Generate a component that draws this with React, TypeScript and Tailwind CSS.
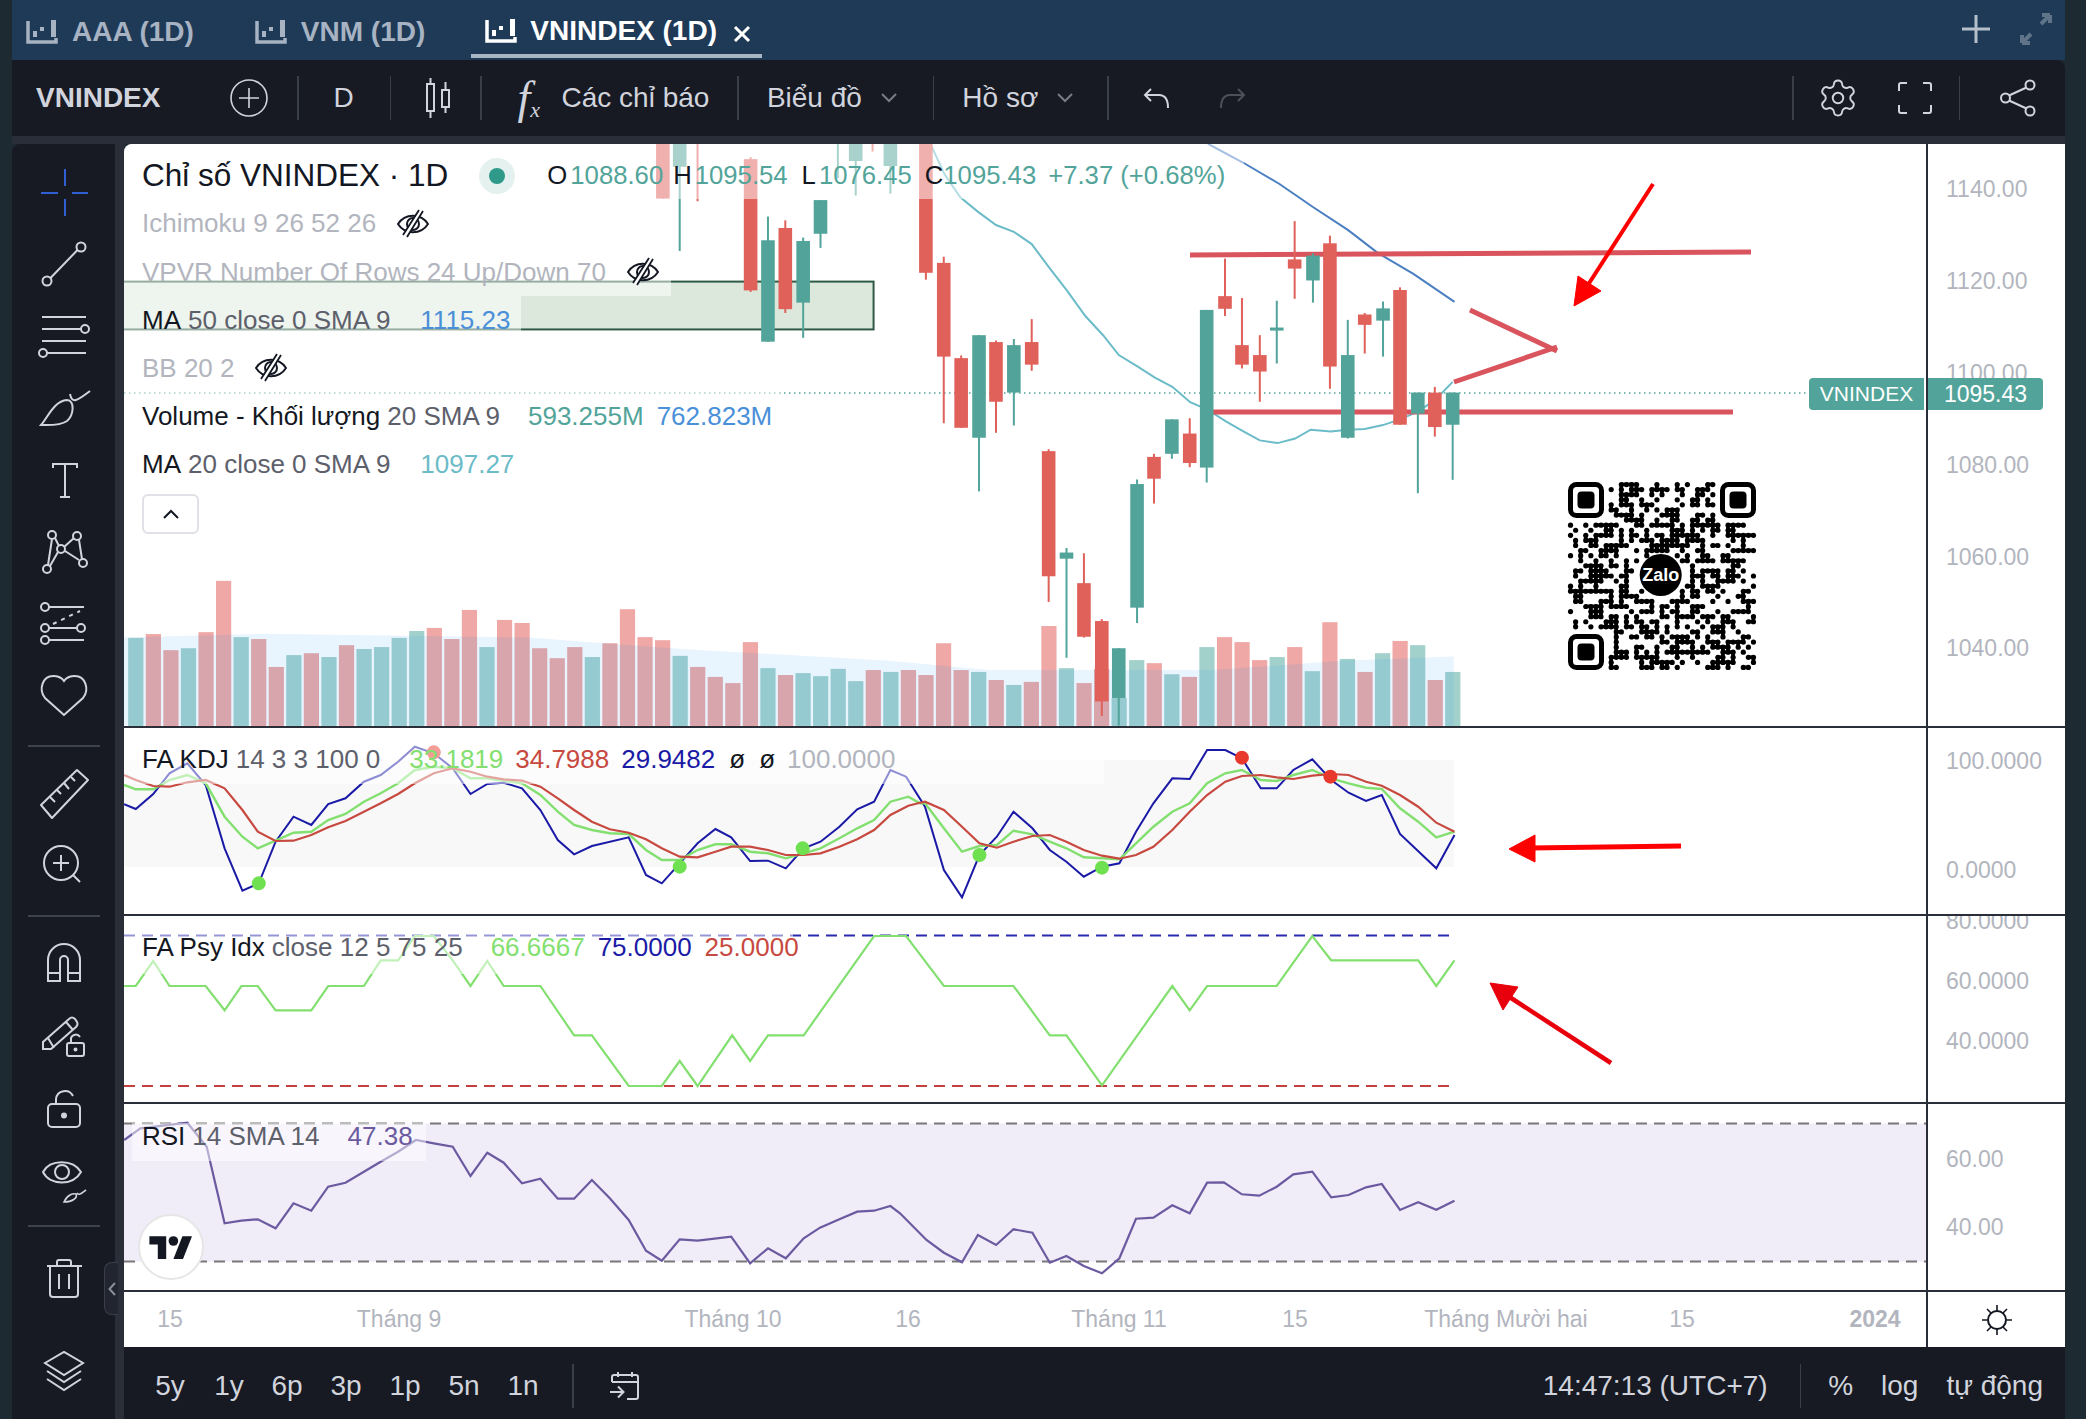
import { ReactNode } from "react";
import { Settings } from "lucide-react";

// page coordinates of the samples read off the chart
const x5 = (z: number) => 120 + z / 1.96;
const x6 = (z: number) => 900 + z / 2.24;
const x9 = (z: number) => 900 + z / 1.322;
const y5 = (z: number) => 140 + z / 2.613;
const y8 = (z: number) => 720 + z / 3;
const y10 = (z: number) => 1100 + z / 3;

const RED = "#e0605a";
const GREEN = "#52a49a";

type Candle = [number, number, number, number, number, "r" | "g"];

const candlesLeft: Candle[] = [
  [1064, 0, 0, 153, 153, "r"],
  [1097, 0, 0, 70, 290, "g"],
  [1132, 0, 0, 10, 160, "r"],
  [1236, 45, 50, 393, 397, "r"],
  [1270, 200, 262, 527, 527, "g"],
  [1304, 210, 230, 442, 452, "r"],
  [1339, 255, 264, 425, 517, "g"],
  [1373, 157, 157, 245, 282, "g"],
  [1407, 0, 0, 10, 100, "g"],
  [1442, 0, 0, 55, 145, "g"],
  [1475, 0, 0, 10, 30, "r"],
  [1510, 0, 0, 68, 140, "g"],
];

const candlesRight: Candle[] = [
  [58, 0, 0, 347, 365, "r"],
  [98, 305, 321, 566, 740, "r"],
  [137, 563, 570, 752, 752, "r"],
  [177, 510, 510, 778, 918, "g"],
  [215, 524, 528, 684, 765, "r"],
  [255, 520, 536, 660, 746, "g"],
  [295, 468, 528, 587, 603, "r"],
  [333, 808, 813, 1140, 1207, "r"],
  [373, 1066, 1078, 1094, 1353, "g"],
  [412, 1080, 1158, 1298, 1300, "r"],
  [452, 1252, 1257, 1467, 1505, "r"],
  [490, 1328, 1328, 1458, 1530, "g"],
  [531, 887, 899, 1222, 1262, "g"],
  [569, 820, 828, 885, 950, "r"],
  [609, 730, 730, 820, 833, "g"],
  [649, 727, 767, 844, 855, "r"],
  [687, 444, 444, 856, 895, "g"],
  [728, 310, 408, 441, 460, "r"],
  [766, 413, 536, 587, 597, "r"],
  [806, 510, 562, 605, 684, "r"],
  [844, 420, 490, 498, 584, "g"],
  [884, 212, 312, 336, 415, "r"],
  [925, 296, 302, 367, 425, "g"],
  [963, 250, 270, 592, 650, "r"],
  [1003, 470, 562, 778, 780, "g"],
  [1041, 452, 456, 483, 558, "r"],
  [1082, 422, 440, 472, 566, "g"],
  [1120, 385, 392, 744, 744, "r"],
  [1160, 660, 660, 715, 923, "g"],
  [1198, 645, 660, 750, 775, "r"],
  [1238, 660, 660, 744, 888, "g"],
];

const candles: Candle[] = [
  ...candlesLeft.map((c) => [x5(c[0]), y5(c[1]), y5(c[2]), y5(c[3]), y5(c[4]), c[5]] as Candle),
  ...candlesRight.map((c) => [x6(c[0]), y5(c[1]), y5(c[2]), y5(c[3]), y5(c[4]), c[5]] as Candle),
];

// volume bar tops, left to right
const volume: [number, "r" | "g"][] = [
  [1301, "g"], [1291, "r"], [1333, "r"], [1328, "g"], [1286, "r"], [1152, "r"], [1299, "g"], [1304, "r"],
  [1377, "r"], [1346, "g"], [1341, "r"], [1351, "g"], [1320, "r"], [1330, "g"], [1325, "g"], [1301, "g"],
  [1283, "g"], [1275, "r"], [1304, "r"], [1228, "r"], [1325, "g"], [1254, "r"], [1262, "r"], [1328, "r"],
  [1354, "r"], [1325, "r"], [1351, "g"], [1315, "r"], [1226, "r"], [1299, "r"], [1307, "r"], [1348, "g"],
  [1377, "r"], [1403, "r"], [1419, "r"], [1312, "r"], [1380, "g"], [1398, "r"], [1393, "g"], [1401, "g"],
  [1382, "g"], [1414, "g"], [1385, "r"], [1390, "g"], [1385, "r"], [1398, "r"], [1315, "r"], [1385, "r"],
  [1390, "g"], [1411, "r"], [1424, "g"], [1416, "r"], [1270, "r"], [1380, "g"], [1419, "r"], [1382, "r"],
  [1458, "g"], [1359, "g"], [1367, "r"], [1396, "g"], [1403, "r"], [1325, "g"], [1299, "r"], [1312, "r"],
  [1359, "r"], [1351, "g"], [1325, "r"], [1388, "g"], [1260, "r"], [1356, "g"], [1390, "r"], [1341, "g"],
  [1309, "r"], [1320, "g"], [1411, "r"], [1390, "g"],
];

const plot = (pts: number[][], fx: (z: number) => number, fy: (z: number) => number) =>
  pts.map(([x, y]) => `${fx(x).toFixed(1)},${fy(y).toFixed(1)}`).join(" ");

// left half sampled at one scale, right half at another
const plotTwo = (left: number[][], right: number[][], fy: (z: number) => number) => {
  const start = x9(right[0][0]);
  const l = left.filter(([x]) => x5(x) < start);
  return plot(l, x5, fy) + " " + plot(right, x9, fy);
};

const ma20 = plot(
  [[68, 10], [100, 90], [135, 150], [175, 188], [215, 222], [255, 240], [295, 272], [335, 335], [375, 395], [415, 460], [455, 510], [490, 562], [530, 590], [570, 620], [610, 645], [650, 685], [690, 705], [730, 735], [770, 762], [806, 785], [846, 792], [885, 780], [920, 757], [965, 762], [1003, 757], [1041, 755], [1082, 745], [1120, 730], [1160, 710], [1198, 680], [1238, 632]],
  x6,
  y5
);
const ma50 = plot(
  [[690, 10], [770, 60], [850, 115], [925, 175], [1003, 235], [1070, 295], [1150, 350], [1242, 423]],
  x6,
  y5
);
const volumeArea =
  plot([[8, 1300], [280, 1290], [800, 1300], [1100, 1330], [1500, 1360]], x5, y5) +
  " " +
  plot([[200, 1385], [400, 1385], [700, 1385], [1000, 1360], [1240, 1350], [1240, 1530]], x6, y5) +
  ` ${x5(8)},${y5(1530)}`;

const kdjBlue = plotTwo(
  [[8, 253], [31, 267], [65, 222], [97, 160], [132, 130], [168, 195], [205, 385], [240, 512], [272, 490], [305, 365], [340, 290], [375, 315], [408, 252], [442, 235], [478, 185], [511, 165], [545, 125], [578, 80], [615, 100], [652, 145], [687, 222], [720, 192], [752, 188], [788, 205], [824, 270], [858, 360], [890, 403], [925, 378], [997, 352], [1031, 465], [1062, 490], [1097, 430], [1132, 370], [1167, 327], [1198, 352], [1235, 423], [1270, 422], [1305, 445], [1340, 385], [1373, 365], [1410, 320], [1445, 268], [1478, 245], [1510, 150]],
  [[8, 170], [33, 260], [58, 450], [82, 532], [105, 405], [128, 350], [150, 275], [175, 325], [198, 390], [220, 425], [243, 470], [267, 440], [290, 430], [312, 335], [335, 250], [360, 175], [383, 177], [406, 90], [430, 90], [452, 115], [477, 205], [498, 205], [520, 150], [545, 118], [570, 180], [593, 218], [616, 243], [637, 225], [661, 342], [709, 445], [733, 345]],
  y8
);
const kdjGreen = plotTwo(
  [[8, 195], [31, 208], [65, 208], [97, 180], [132, 165], [168, 190], [205, 290], [240, 350], [270, 385], [305, 362], [340, 338], [375, 335], [408, 300], [442, 282], [478, 245], [511, 220], [545, 190], [578, 150], [615, 140], [652, 145], [687, 175], [720, 175], [752, 182], [788, 190], [824, 225], [858, 275], [890, 315], [925, 330], [960, 340], [997, 342], [1031, 390], [1062, 420], [1097, 420], [1132, 390], [1167, 373], [1198, 373], [1235, 395], [1270, 400], [1305, 415], [1340, 400], [1373, 385], [1410, 355], [1445, 325], [1478, 300], [1510, 245], [1545, 230], [1568, 250]],
  [[33, 250], [58, 325], [82, 395], [105, 378], [128, 375], [150, 332], [175, 343], [198, 365], [220, 385], [243, 412], [267, 415], [290, 418], [312, 370], [335, 320], [360, 275], [383, 250], [406, 190], [430, 160], [452, 150], [477, 180], [498, 183], [520, 165], [545, 150], [570, 175], [593, 190], [616, 203], [637, 207], [661, 265], [685, 305], [709, 352], [733, 335]],
  y8
);
const kdjRed = plotTwo(
  [[8, 165], [31, 180], [65, 198], [97, 200], [132, 187], [168, 180], [205, 205], [240, 270], [270, 335], [305, 363], [340, 362], [375, 345], [408, 322], [442, 303], [478, 275], [511, 250], [545, 222], [578, 190], [615, 160], [652, 145], [687, 155], [720, 170], [752, 178], [788, 182], [824, 200], [858, 235], [890, 270], [925, 305], [960, 328], [997, 338], [1031, 358], [1062, 385], [1097, 410], [1132, 412], [1167, 395], [1198, 380], [1235, 380], [1270, 390], [1305, 405], [1340, 405], [1373, 400], [1410, 380], [1445, 358], [1478, 330], [1510, 285], [1545, 257], [1568, 248]],
  [[33, 245], [58, 270], [82, 320], [105, 370], [128, 383], [150, 365], [175, 348], [198, 345], [220, 365], [243, 390], [267, 407], [290, 416], [312, 405], [335, 380], [360, 330], [383, 275], [406, 225], [430, 185], [452, 168], [477, 165], [498, 172], [520, 177], [545, 167], [570, 162], [593, 165], [616, 185], [637, 197], [661, 225], [685, 260], [709, 308], [733, 335]],
  y8
);
const psyLine = plotTwo(
  [[8, 795], [31, 795], [65, 720], [97, 795], [168, 795], [205, 868], [238, 795], [270, 795], [305, 868], [375, 868], [408, 795], [478, 795], [511, 718], [545, 718], [578, 645], [615, 645], [652, 718], [687, 795], [720, 720], [752, 795], [824, 795], [890, 943], [925, 943], [997, 1095], [1062, 1095], [1097, 1020], [1132, 1095], [1200, 943], [1235, 1020], [1270, 943], [1340, 943], [1478, 645], [1540, 645]],
  [[8, 645], [58, 795], [150, 795], [198, 943], [220, 943], [267, 1093], [360, 795], [383, 868], [406, 795], [498, 795], [545, 645], [570, 718], [685, 718], [709, 795], [733, 718]],
  y8
);
const rsiLine = plotTwo(
  [[8, 120], [40, 85], [132, 68], [170, 140], [205, 370], [238, 362], [270, 358], [305, 385], [340, 310], [375, 332], [408, 260], [442, 248], [478, 215], [511, 185], [545, 155], [580, 120], [615, 130], [652, 140], [687, 228], [720, 158], [752, 188], [788, 250], [824, 236], [858, 296], [890, 296], [925, 240], [960, 295], [997, 360], [1031, 452], [1062, 482], [1097, 418], [1132, 422], [1198, 410], [1235, 490], [1270, 445], [1305, 475], [1340, 415], [1372, 383], [1410, 358], [1445, 335], [1478, 332], [1510, 318]],
  [[0, 340], [35, 420], [58, 458], [82, 487], [103, 405], [127, 435], [150, 388], [175, 398], [198, 488], [220, 468], [243, 498], [267, 520], [290, 475], [312, 356], [335, 353], [360, 316], [383, 340], [406, 248], [428, 247], [452, 283], [475, 287], [498, 260], [520, 223], [545, 215], [570, 292], [593, 285], [616, 262], [637, 252], [661, 330], [685, 307], [709, 329], [733, 302]],
  y10
);

// QR code body: a seeded dot pattern on a 37 module grid
const QR_N = 37;
const qrCells = (() => {
  let seed = 7731;
  const cells: boolean[][] = [];
  for (let r = 0; r < QR_N; r++) {
    const row: boolean[] = [];
    for (let c = 0; c < QR_N; c++) {
      seed = (seed * 1103515245 + 12345) & 0x7fffffff;
      const inFinder = (r < 8 && c < 8) || (r < 8 && c > 28) || (r > 28 && c < 8);
      const dr = r - 18;
      const dc = c - 18;
      const inLogo = dr * dr + dc * dc < 22;
      row.push(!inFinder && !inLogo && (seed >> 16) % 100 < 50);
    }
    cells.push(row);
  }
  return cells;
})();

function QrCode() {
  const p = 188 / QR_N;
  const finder = (x: number, y: number) => (
    <g key={`${x}-${y}`}>
      <rect x={x + 2.5} y={y + 2.5} width={31} height={31} rx={6} fill="none" stroke="#000" strokeWidth={5} />
      <rect x={x + 9.5} y={y + 9.5} width={17} height={17} rx={4} fill="#000" />
    </g>
  );
  return (
    <g transform="translate(1568 482)">
      {qrCells.map((row, r) =>
        row.map((on, c) =>
          on ? (
            <g key={`${r}-${c}`}>
              <circle cx={c * p + p / 2} cy={r * p + p / 2} r={2.6} fill="#000" />
              {row[c + 1] && <rect x={c * p + p / 2} y={r * p + 0.6} width={p} height={p - 1.4} fill="#000" />}
              {qrCells[r + 1]?.[c] && <rect x={c * p + 0.6} y={r * p + p / 2} width={p - 1.4} height={p} fill="#000" />}
            </g>
          ) : null
        )
      )}
      {finder(0, 0)}
      {finder(152, 0)}
      {finder(0, 152)}
      <circle cx={92.7} cy={93} r={21} fill="#000" />
      <text x={92.7} y={99} textAnchor="middle" fill="#fff" fontSize={18} fontWeight={700} fontFamily="Liberation Sans, sans-serif">
        Zalo
      </text>
    </g>
  );
}

function MainChart() {
  return (
    <svg className="block w-[1802px] h-[582px]" viewBox="124 144 1802 582">
      <rect x={120} y={y5(370)} width={x5(1477) - 120} height={y5(495) - y5(370)} fill="#dce8dc" stroke="#2d5a44" strokeWidth={2} />
      {volume.map(([top, c], i) => (
        <rect
          key={i}
          x={135.8 + i * 17.56 - 7.6}
          y={y5(top)}
          width={15.2}
          height={726 - y5(top)}
          fill={c === "r" ? "#e0524c" : "#45a39a"}
          opacity={0.5}
        />
      ))}
      <polygon points={volumeArea} fill="#2196f3" opacity={0.1} />
      <line x1={124} y1={393} x2={1812} y2={393} stroke={GREEN} strokeWidth={1.5} strokeDasharray="1.5 3.5" />
      <polyline points={ma20} fill="none" stroke="#6bbcc8" strokeWidth={2} />
      <polyline points={ma50} fill="none" stroke="#4a7fc1" strokeWidth={2} />
      <g stroke="#d9545c" fill="none" strokeWidth={5}>
        <line x1={1190} y1={255} x2={1751} y2={252} />
        <line x1={1212} y1={412} x2={1733} y2={412} />
        <line x1={1470} y1={310} x2={1557} y2={351} />
        <line x1={1454} y1={382} x2={1557} y2={347} />
      </g>
      {candles.map(([x, wt, bt, bb, wb, c], i) => (
        <g key={i} fill={c === "r" ? RED : GREEN}>
          <rect x={x - 1} y={wt} width={2} height={wb - wt} />
          <rect x={x - 6.8} y={bt} width={13.6} height={bb - bt} />
        </g>
      ))}
      <QrCode />
      <g fill="#f00" stroke="#f00">
        <line x1={1653} y1={184} x2={1586} y2={288} strokeWidth={4} />
        <polygon points="1574,306 1578,276 1601,291" />
      </g>
    </svg>
  );
}

function KdjChart() {
  const dots: [number, number, string][] = [
    [x5(272), y8(490), "#6fe04f"],
    [x5(1097), y8(440), "#6fe04f"],
    [x5(1338), y8(385), "#6fe04f"],
    [x9(105), y8(405), "#6fe04f"],
    [x9(267), y8(443), "#6fe04f"],
    [x5(615), y8(97), "#e8392c"],
    [x9(452), y8(113), "#e8392c"],
    [x9(569), y8(170), "#e8392c"],
  ];
  return (
    <svg className="block w-[1802px] h-[186px]" viewBox="124 728 1802 186">
      <rect x={124} y={760} width={1330} height={107} fill="#f8f8f9" />
      <polyline points={kdjBlue} fill="none" stroke="#1a1aa6" strokeWidth={2} />
      <polyline points={kdjGreen} fill="none" stroke="#83e070" strokeWidth={2.4} />
      <polyline points={kdjRed} fill="none" stroke="#c7493f" strokeWidth={2.2} />
      {dots.map(([x, y, c], i) => (
        <circle key={i} cx={x} cy={y} r={7} fill={c} />
      ))}
      <g fill="#f00" stroke="#f00">
        <line x1={1681} y1={846} x2={1530} y2={848} strokeWidth={5} />
        <polygon points="1509,849 1535,835 1535,862" />
      </g>
    </svg>
  );
}

function PsyChart() {
  return (
    <svg className="block w-[1802px] h-[186px]" viewBox="124 915 1802 186">
      <line x1={124} y1={934.5} x2={1454} y2={934.5} stroke="#2a2ab0" strokeWidth={2} strokeDasharray="11 7" />
      <line x1={124} y1={1085} x2={1454} y2={1085} stroke="#c2403f" strokeWidth={2} strokeDasharray="11 7" />
      <polyline points={psyLine} fill="none" stroke="#83e070" strokeWidth={2.2} />
      <g fill="#e8000d" stroke="#e8000d">
        <line x1={1611} y1={1062} x2={1508} y2={995} strokeWidth={4.5} />
        <polygon points="1490,982 1518,986 1503,1009" />
      </g>
    </svg>
  );
}

function RsiChart() {
  return (
    <svg className="block w-[1802px] h-[186px]" viewBox="124 1104 1802 186">
      <rect x={124} y={1123.5} width={1802} height={138} fill="#f0ecf8" />
      <line x1={124} y1={1123.5} x2={1926} y2={1123.5} stroke="#787878" strokeWidth={2} strokeDasharray="11 7" />
      <line x1={124} y1={1261.5} x2={1926} y2={1261.5} stroke="#787878" strokeWidth={2} strokeDasharray="11 7" />
      <polyline points={rsiLine} fill="none" stroke="#6b5aa0" strokeWidth={2.2} />
    </svg>
  );
}

function EyeOff() {
  return (
    <svg width="32" height="28" viewBox="0 0 32 28" className="overflow-visible">
      <path d="M1 14 C8 3 24 3 31 14 C24 25 8 25 1 14Z" fill="none" stroke="#131722" strokeWidth="2" />
      <circle cx="16" cy="14" r="6" fill="none" stroke="#131722" strokeWidth="2" />
      <path d="M25 0 L8 26" stroke="#fff" strokeWidth="4" />
      <path d="M26 1 L10 27 M22 0 L6 25" stroke="#131722" strokeWidth="1.8" />
    </svg>
  );
}

function TabIcon({ color }: { color: string }) {
  return (
    <svg width="32" height="24" viewBox="0 0 32 24" fill={color}>
      <path d="M2 1 V22 H30 V18" fill="none" stroke={color} strokeWidth="3.5" />
      <rect x="7" y="11" width="4" height="6" />
      <rect x="14" y="7" width="4" height="4" />
      <rect x="25" y="0" width="5" height="17" />
    </svg>
  );
}

function Sep() {
  return <div className="w-[1.5px] h-[44px] bg-[#3a3e49] shrink-0" />;
}

function Chevron({ className }: { className: string }) {
  return (
    <svg width="16" height="10" viewBox="0 0 16 10" className={className}>
      <path d="M1 1 L8 8 L15 1" fill="none" stroke="#787b86" strokeWidth="2" />
    </svg>
  );
}

function Tool({ className, children }: { className: string; children: ReactNode }) {
  return (
    <svg viewBox="0 0 48 48" className={`w-12 h-12 shrink-0 overflow-visible fill-none stroke-[#d1d4dc] stroke-2 ${className}`}>
      {children}
    </svg>
  );
}

function ToolSep({ className }: { className: string }) {
  return <div className={`w-[72px] h-[2px] bg-[#3e424d] shrink-0 ${className}`} />;
}

function LeftToolbar() {
  return (
    <div className="relative w-[103px] shrink-0 bg-[#171a23] rounded-tl-lg flex flex-col items-center pt-[25px]">
      <Tool className="">
        <path d="M25 0 V17 M25 30 V47 M1 24 H18 M32 24 H48" stroke="#2f5fd0" />
      </Tool>
      <Tool className="mt-[23px]">
        <circle cx="41" cy="7" r="4.5" />
        <circle cx="7" cy="41" r="4.5" />
        <path d="M37.5 10 L10.5 38" />
      </Tool>
      <Tool className="mt-[23px]">
        <path d="M2 6 H46 M2 18 H41 M2 30 H46 M7 42 H46" />
        <circle cx="45" cy="18" r="4" />
        <circle cx="3" cy="42" r="4" />
      </Tool>
      <Tool className="mt-[28px]">
        <path d="M1 38 C8 30 14 14 27 13 C35 13 34 28 27 34 C20 39 8 38 1 38Z" />
        <path d="M30 7 C32 17 37 14 50 4" />
      </Tool>
      <Tool className="mt-[20px]">
        <path d="M13 13 V9 H37 V13 M25 9 V42 M20 42 H30" />
      </Tool>
      <Tool className="mt-[22px]">
        <path d="M12 14 L8 40 M15 13 L19 21 M34 13 L24 22 M39 15 L42 34 M25 26 L39 35 M18 27 L10 41" />
        <circle cx="12" cy="10" r="4" />
        <circle cx="37" cy="11" r="4" />
        <circle cx="21" cy="24" r="4" />
        <circle cx="43" cy="38" r="4" />
        <circle cx="7" cy="44" r="4" />
      </Tool>
      <Tool className="mt-[27px]">
        <path d="M9 7 H44 M9 28 H37 M9 40 H44" />
        <circle cx="5" cy="7" r="4" />
        <circle cx="5" cy="28" r="4" />
        <circle cx="41" cy="28" r="4" />
        <circle cx="5" cy="40" r="4" />
        <path d="M13 24 L40 11" strokeDasharray="4 5" />
      </Tool>
      <Tool className="mt-[23px]">
        <path d="M24 44 L5 27 C-2 18 3 5 13 5 C18 5 22 7 24 10 C26 7 30 5 35 5 C45 5 50 18 43 27 Z" />
      </Tool>
      <ToolSep className="mt-[26px]" />
      <Tool className="mt-[23px]">
        <path d="M1 35 L12 48 L48 10 L37 0 Z" strokeLinejoin="round" />
        <path d="M10 27 L15 32 M17 20 L21 24 M24 13 L29 19 M31 7 L35 11" />
      </Tool>
      <Tool className="mt-[23px]">
        <circle cx="21" cy="22" r="17" />
        <path d="M21 14 V30 M13 22 H29 M33 34 L40 41" />
      </Tool>
      <ToolSep className="mt-[26px]" />
      <Tool className="mt-[22px]">
        <path d="M8 42 V21 A16 16 0 0 1 40 21 V42 H28 V21 A4 4 0 0 0 20 21 V42 Z M8 34 H20 M28 34 H40" />
      </Tool>
      <Tool className="mt-[24px]">
        <path d="M3 38 L3 31 L29 8 C31 6 33 6 35 8 L37 11 C38 13 38 14 36 16 L11 38 Z M8 27 L14 37 M26 11 L33 19" />
        <rect x="27" y="32" width="17" height="13" rx="2" />
        <path d="M31 32 V27 A5 5 0 0 1 40 26" />
        <circle cx="35.5" cy="38.5" r="1" />
      </Tool>
      <Tool className="mt-[27px]">
        <rect x="8" y="18" width="32" height="23" rx="4" />
        <path d="M16 18 V13 A9 9 0 0 1 33 10" />
        <circle cx="24" cy="29.5" r="2" fill="#d1d4dc" />
      </Tool>
      <Tool className="mt-[22px]">
        <path d="M3 16 C10 3 33 3 41 16 C33 30 10 30 3 16Z" />
        <circle cx="22" cy="16" r="7" />
        <path d="M24 46 C27 39 33 37 36 38 C38 42 32 46 24 46Z M37 37 C39 40 42 37 46 34" strokeWidth="1.6" />
      </Tool>
      <ToolSep className="mt-[21px]" />
      <Tool className="mt-[29px]">
        <path d="M7 10 H42 M17 10 V6 C17 5 18 4 19 4 H29 C30 4 31 5 31 6 V10 M10 10 V38 C10 40 11 41 13 41 H35 C37 41 38 40 38 38 V10 M19 18 V33 M29 18 V33" />
      </Tool>
      <Tool className="mt-[46px]">
        <path d="M5 13 L24 2 L43 13 L24 25 Z M7 21 L24 32 L41 21 M7 29 L24 40 L41 29" />
      </Tool>
      <div className="absolute left-[92px] top-[1118px] w-[14px] h-[53px] rounded-l-lg border border-r-0 border-[#3a3e49] bg-[#22252f] flex items-center justify-center">
        <svg width="8" height="14" viewBox="0 0 8 14">
          <path d="M7 1 L1.5 7 L7 13" fill="none" stroke="#8a8e99" strokeWidth="2" />
        </svg>
      </div>
    </div>
  );
}

function LegendRow({ className, children }: { className: string; children: ReactNode }) {
  return <div className={`flex items-center whitespace-nowrap bg-white/50 pl-[18px] ${className}`}>{children}</div>;
}

function MainLegend() {
  return (
    <div className="absolute left-0 top-0 flex flex-col text-[26px] text-[#5d606b]">
      <LegendRow className="h-[55px] w-[1120px] pt-[8px] text-[25.7px]">
        <span className="text-[31.5px] text-[#131722]">Chỉ số VNINDEX · 1D</span>
        <div className="ml-[31px] w-9 h-9 rounded-full bg-[#e5f1ef] flex items-center justify-center">
          <div className="w-4 h-4 rounded-full bg-[#2f9a8a]" />
        </div>
        <span className="ml-[32px] text-[#131722]">O</span>
        <span className="ml-[3px] text-[#52a49a]">1088.60</span>
        <span className="ml-[10px] text-[#131722]">H</span>
        <span className="ml-[3px] text-[#52a49a]">1095.54</span>
        <span className="ml-[14px] text-[#131722]">L</span>
        <span className="ml-[3px] text-[#52a49a]">1076.45</span>
        <span className="ml-[13px] text-[#131722]">C</span>
        <span className="text-[#52a49a]">1095.43</span>
        <span className="ml-[12px] text-[#52a49a]">+7.37 (+0.68%)</span>
      </LegendRow>
      <LegendRow className="h-[49px] w-fit pr-2 text-[#b2b5be]">
        <span>Ichimoku 9 26 52 26</span>
        <span className="ml-[21px] flex">
          <EyeOff />
        </span>
      </LegendRow>
      <LegendRow className="h-[48px] w-[547px] text-[#b2b5be]">
        <span>VPVR Number Of Rows 24 Up/Down 70</span>
        <span className="ml-[21px] flex">
          <EyeOff />
        </span>
      </LegendRow>
      <LegendRow className="h-[48px] w-[397px]">
        <span className="text-[#131722]">MA</span>
        <span className="ml-[7px]">50 close 0 SMA 9</span>
        <span className="ml-[30px] text-[#4a90d9]">1115.23</span>
      </LegendRow>
      <LegendRow className="h-[48px] w-fit pr-2 text-[#b2b5be]">
        <span>BB 20 2</span>
        <span className="ml-[20px] flex">
          <EyeOff />
        </span>
      </LegendRow>
      <LegendRow className="h-[48px] w-fit pr-2">
        <span className="text-[#131722]">Volume - Khối lượng</span>
        <span className="ml-[7px]">20 SMA 9</span>
        <span className="ml-[28px] text-[#52a49a]">593.255M</span>
        <span className="ml-[13px] text-[#4a90d9]">762.823M</span>
      </LegendRow>
      <LegendRow className="h-[48px] w-fit pr-2">
        <span className="text-[#131722]">MA</span>
        <span className="ml-[7px]">20 close 0 SMA 9</span>
        <span className="ml-[30px] text-[#6bbcc8]">1097.27</span>
      </LegendRow>
      <div className="ml-[18px] mt-[6px] w-[57px] h-[40px] rounded-md border-2 border-[#dfe1e6] bg-white flex items-center justify-center">
        <svg width="16" height="10" viewBox="0 0 16 10">
          <path d="M1 9 L8 2 L15 9" fill="none" stroke="#131722" strokeWidth="2" />
        </svg>
      </div>
    </div>
  );
}

function AxisLabel({ children }: { children: ReactNode }) {
  return <div className="h-8 leading-8">{children}</div>;
}

function Axis({ className, children }: { className: string; children?: ReactNode }) {
  return (
    <div className={`w-[139px] shrink-0 border-l-2 border-[#2a2e39] pl-[18px] overflow-hidden flex flex-col text-[23px] text-[#b2b5be] ${className}`}>
      {children}
    </div>
  );
}

function Tick({ className, children }: { className: string; children: ReactNode }) {
  return <div className={`w-0 flex justify-center whitespace-nowrap ${className}`}>{children}</div>;
}

export default function App() {
  return (
    <div className="w-[2086px] h-[1419px] overflow-hidden bg-[#1e2a32] pl-3 pr-[21px] flex flex-col font-['Liberation_Sans',sans-serif]">
      {/* Tabs */}
      <div className="h-[60px] shrink-0 bg-[#1f3a57] flex items-start text-[28px] font-bold text-[#a7b3c2]">
        <div className="h-[58px] flex items-center pl-[14px] pt-[6px]">
          <TabIcon color="#a7b3c2" />
          <span className="ml-[14px]">AAA (1D)</span>
        </div>
        <div className="h-[58px] flex items-center ml-[61px] pt-[6px]">
          <TabIcon color="#a7b3c2" />
          <span className="ml-[14px]">VNM (1D)</span>
        </div>
        <div className="h-[58px] ml-[46px] pl-[14px] pr-[11px] pt-[7px] flex items-center border-b-4 border-[#a8b5c4] text-white">
          <TabIcon color="#ffffff" />
          <span className="ml-[13px]">VNINDEX (1D)</span>
          <svg width="18" height="18" viewBox="0 0 18 18" className="ml-[16px] mt-[6px]">
            <path d="M2 2 L16 16 M16 2 L2 16" stroke="#fff" strokeWidth="3" />
          </svg>
        </div>
        <div className="flex-1" />
        <div className="h-[58px] flex items-center pr-[12px]">
          <svg width="30" height="30" viewBox="0 0 30 30">
            <path d="M15 1 V29 M1 15 H29" stroke="#b5c0cc" strokeWidth="3" />
          </svg>
          <svg width="34" height="34" viewBox="0 0 34 34" className="ml-[28px]">
            <path d="M22 12 L31 3 M31 3 H23 M31 3 V11 M12 22 L3 31 M3 31 H11 M3 31 V23" fill="none" stroke="#5f7488" strokeWidth="4" />
          </svg>
        </div>
      </div>

      {/* Top toolbar */}
      <div className="h-[76px] shrink-0 bg-[#171a23] rounded-tr-lg flex items-center pl-[24px] pr-[29px] text-[28px] text-[#d1d4dc]">
        <span className="font-bold w-[124px]">VNINDEX</span>
        <svg width="38" height="38" viewBox="0 0 38 38" className="ml-[70px]">
          <circle cx="19" cy="19" r="18" fill="none" stroke="#d1d4dc" strokeWidth="1.6" />
          <path d="M19 9 V29 M9 19 H29" stroke="#d1d4dc" strokeWidth="1.6" />
        </svg>
        <div className="ml-[29px]"><Sep /></div>
        <span className="ml-[35px] w-[20px]">D</span>
        <div className="ml-[36px]"><Sep /></div>
        <svg width="24" height="40" viewBox="0 0 24 40" className="ml-[35px]">
          <g fill="none" stroke="#d1d4dc" strokeWidth="2">
            <rect x="1" y="6" width="7" height="27" />
            <path d="M4.5 0 V6 M4.5 33 V40" />
            <rect x="16" y="12" width="7" height="17" />
            <path d="M19.5 4 V12 M19.5 29 V35" />
          </g>
        </svg>
        <div className="ml-[30px]"><Sep /></div>
        <div className="ml-[36px] w-[34px] flex items-end font-['Liberation_Serif',serif] italic">
          <span className="text-[46px] leading-[46px]">f</span>
          <span className="text-[22px] leading-[22px]">x</span>
        </div>
        <span className="ml-[10px] whitespace-nowrap">Các chỉ báo</span>
        <div className="ml-[28px]"><Sep /></div>
        <span className="ml-[28px] whitespace-nowrap">Biểu đồ</span>
        <Chevron className="ml-[19px]" />
        <div className="ml-[36px]"><Sep /></div>
        <span className="ml-[28px] whitespace-nowrap">Hồ sơ</span>
        <Chevron className="ml-[19px]" />
        <div className="ml-[34px]"><Sep /></div>
        <svg width="27" height="22" viewBox="0 0 27 22" className="ml-[34px]">
          <path d="M8 2 L2 8 L8 14 M2 8 H16 C22 8 25 12 25 21" fill="none" stroke="#d1d4dc" strokeWidth="2" />
        </svg>
        <svg width="27" height="22" viewBox="0 0 27 22" className="ml-[49px]">
          <path d="M19 2 L25 8 L19 14 M25 8 H11 C5 8 2 12 2 21" fill="none" stroke="#4d5059" strokeWidth="2" />
        </svg>
        <div className="flex-1" />
        <Sep />
        <Settings size={42} strokeWidth={1.1} className="ml-[23px] text-[#d1d4dc]" />
        <svg width="34" height="32" viewBox="0 0 34 32" className="ml-[39px]">
          <path d="M1 9 V3 C1 2 2 1 3 1 H9 M25 1 H31 C32 1 33 2 33 3 V9 M33 23 V29 C33 30 32 31 31 31 H25 M9 31 H3 C2 31 1 30 1 29 V23" fill="none" stroke="#d1d4dc" strokeWidth="2" />
        </svg>
        <div className="ml-[27px]"><Sep /></div>
        <svg width="36" height="38" viewBox="0 0 36 38" className="ml-[40px]">
          <g fill="none" stroke="#d1d4dc" strokeWidth="2">
            <circle cx="30" cy="6" r="4.5" />
            <circle cx="5.5" cy="19" r="4.5" />
            <circle cx="30" cy="32" r="4.5" />
            <path d="M26.5 8.5 L9 16.5 M9 21.5 L26.5 29.5" />
          </g>
        </svg>
      </div>

      <div className="h-2 shrink-0 bg-[#2a2e39]" />

      <div className="flex-1 flex min-h-0">
        <LeftToolbar />
        <div className="w-[9px] shrink-0 bg-[#2a2e39]" />
        <div className="flex-1 flex flex-col min-w-0">
          <div className="rounded-tl-lg overflow-hidden bg-white flex flex-col">
            {/* Main pane */}
            <div className="relative flex h-[584px] border-b-2 border-[#2a2e39]">
              <div className="relative w-[1802px] overflow-hidden">
                <MainChart />
                <MainLegend />
              </div>
              <Axis className="pt-[29px] gap-[59.9px]">
                <AxisLabel>1140.00</AxisLabel>
                <AxisLabel>1120.00</AxisLabel>
                <AxisLabel>1100.00</AxisLabel>
                <AxisLabel>1080.00</AxisLabel>
                <AxisLabel>1060.00</AxisLabel>
                <AxisLabel>1040.00</AxisLabel>
              </Axis>
              <div className="absolute left-[1685px] top-[234px] flex h-8 text-white whitespace-nowrap">
                <div className="w-[115px] rounded-l bg-[#52a49a] flex items-center justify-center text-[21px]">VNINDEX</div>
                <div className="ml-[4px] w-[115px] rounded-r bg-[#52a49a] flex items-center justify-center text-[23px]">1095.43</div>
              </div>
            </div>

            {/* FA KDJ */}
            <div className="flex h-[188px] border-b-2 border-[#2a2e39]">
              <div className="relative w-[1802px] overflow-hidden">
                <KdjChart />
                <div className="absolute left-0 top-0 h-[56px] w-[980px] flex items-center whitespace-nowrap bg-white/50 pl-[18px] pt-[6px] text-[26px] text-[#5d606b]">
                  <span className="text-[#131722]">FA KDJ</span>
                  <span className="ml-[7px]">14 3 3 100 0</span>
                  <span className="ml-[29px] text-[#83e070]">33.1819</span>
                  <span className="ml-[12px] text-[#c7493f]">34.7988</span>
                  <span className="ml-[12px] text-[#1a1aa6]">29.9482</span>
                  <span className="ml-[14px] text-[#131722]">ø</span>
                  <span className="ml-[14px] text-[#131722]">ø</span>
                  <span className="ml-[12px] text-[#b2b5be]">100.0000</span>
                </div>
              </div>
              <Axis className="pt-[17px] gap-[77px]">
                <AxisLabel>100.0000</AxisLabel>
                <AxisLabel>0.0000</AxisLabel>
              </Axis>
            </div>

            {/* FA Psy Idx */}
            <div className="flex h-[188px] border-b-2 border-[#2a2e39]">
              <div className="relative w-[1802px] overflow-hidden">
                <PsyChart />
                <div className="absolute left-0 top-0 h-[58px] w-[669px] flex items-center whitespace-nowrap bg-white/50 pl-[18px] pt-[5px] text-[26px] text-[#5d606b]">
                  <span className="text-[#131722]">FA Psy Idx</span>
                  <span className="ml-[7px]">close 12 5 75 25</span>
                  <span className="ml-[28px] text-[#83e070]">66.6667</span>
                  <span className="ml-[13px] text-[#1a1aa6]">75.0000</span>
                  <span className="ml-[13px] text-[#c7493f]">25.0000</span>
                </div>
              </div>
              <Axis className="gap-[28px]">
                <div className="-mt-[11px]">
                  <AxisLabel>80.0000</AxisLabel>
                </div>
                <AxisLabel>60.0000</AxisLabel>
                <AxisLabel>40.0000</AxisLabel>
              </Axis>
            </div>

            {/* RSI */}
            <div className="flex h-[188px] border-b-2 border-[#2a2e39]">
              <div className="relative w-[1802px] overflow-hidden">
                <RsiChart />
                <div className="absolute left-[8px] top-[19px] h-[38px] w-[294px] flex items-center whitespace-nowrap bg-white/50 pl-[10px] pb-[12px] text-[26px] text-[#5d606b]">
                  <span className="text-[#131722]">RSI</span>
                  <span className="ml-[7px]">14 SMA 14</span>
                  <span className="ml-[28px] text-[#6b5aa0]">47.38</span>
                </div>
                <div className="absolute left-[14px] top-[110px] w-[66px] h-[66px] rounded-full bg-white border-2 border-[#e6e6e6] flex items-center justify-center">
                  <svg width="44" height="24" viewBox="0 0 36 20" fill="#131722">
                    <path d="M14 20H7V8H0V1h14v19zM28 20h-8l7.5-19h8L28 20z" />
                    <circle cx="20" cy="5" r="4" />
                  </svg>
                </div>
              </div>
              <Axis className="pt-[39px] gap-[36px]">
                <AxisLabel>60.00</AxisLabel>
                <AxisLabel>40.00</AxisLabel>
              </Axis>
            </div>

            {/* Time axis */}
            <div className="flex h-[55px]">
              <div className="w-[1802px] flex items-center text-[23px] text-[#b2b5be]">
                <Tick className="ml-[46px]">15</Tick>
                <Tick className="ml-[229px]">Tháng 9</Tick>
                <Tick className="ml-[334px]">Tháng 10</Tick>
                <Tick className="ml-[175px]">16</Tick>
                <Tick className="ml-[211px]">Tháng 11</Tick>
                <Tick className="ml-[176px]">15</Tick>
                <Tick className="ml-[211px]">Tháng Mười hai</Tick>
                <Tick className="ml-[176px]">15</Tick>
                <Tick className="ml-[193px] font-bold">2024</Tick>
              </div>
              <div className="w-[139px] border-l-2 border-[#2a2e39] flex items-center justify-center">
                <svg width="32" height="32" viewBox="0 0 32 32" fill="none" stroke="#131722" strokeWidth="2">
                  <circle cx="16" cy="16" r="9" />
                  <path d="M16 1 V7 M16 25 V31 M1 16 H6 M26 16 H31 M6 5 L10 9 M26 5 L22 9 M6 27 L10 23 M26 27 L22 23" strokeWidth="1.6" />
                </svg>
              </div>
            </div>
          </div>

          {/* Bottom bar */}
          <div className="flex-1 bg-[#171a23] flex items-center pr-[22px] pt-[5px] text-[28px] text-[#d1d4dc]">
            <Tick className="ml-[46px]">5y</Tick>
            <Tick className="ml-[59px]">1y</Tick>
            <Tick className="ml-[58px]">6p</Tick>
            <Tick className="ml-[59px]">3p</Tick>
            <Tick className="ml-[59px]">1p</Tick>
            <Tick className="ml-[59px]">5n</Tick>
            <Tick className="ml-[59px]">1n</Tick>
            <div className="ml-[49px]"><Sep /></div>
            <svg width="32" height="30" viewBox="0 0 32 30" className="ml-[35px]">
              <path d="M3 11 V6 C3 5 4 4 5 4 H27 C28 4 29 5 29 6 V26 C29 27 28 28 27 28 H18 M3 11 H29 M9 1 V6 M23 1 V6 M1 21 H14 M9 15.5 L14.5 21 L9 26.5" fill="none" stroke="#d1d4dc" strokeWidth="2" />
            </svg>
            <div className="flex-1" />
            <span className="whitespace-nowrap">14:47:13 (UTC+7)</span>
            <div className="ml-[32px]"><Sep /></div>
            <span className="ml-[27px]">%</span>
            <span className="ml-[28px]">log</span>
            <span className="ml-[28px] whitespace-nowrap">tự động</span>
          </div>
        </div>
      </div>
    </div>
  );
}
